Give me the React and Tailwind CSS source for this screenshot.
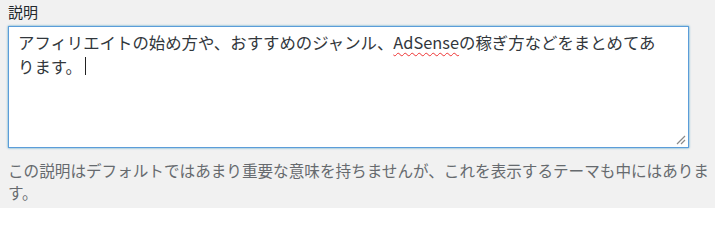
import React from "react";

const jp = { fontFamily: '"Noto Sans CJK JP", "Noto Sans", sans-serif' };

const DescriptionField = () => {
  return (
    <div className="h-[208px] w-full overflow-hidden bg-[#f1f1f1] px-2 pt-[2px]" style={jp}>
      <label className="block text-[15px] leading-5 text-[#23282d]">説明</label>
      <div className="relative mt-[4px] h-[122px] w-[681px] border border-[#5b9dd9] bg-white shadow-[0_0_2px_rgba(30,140,190,0.8)] pl-[9px] pt-[3px]">
        <div className="text-[16.4px] leading-6 text-[#32373c] whitespace-nowrap">
          <div>
            アフィリエイトの始め方や、おすすめのジャンル、
            <span className="underline decoration-wavy decoration-[#e33] decoration-1 underline-offset-[3px]">AdSense</span>
            の稼ぎ方などをまとめてあ
          </div>
          <div className="flex items-center">
            ります。
            <span className="ml-[3px] inline-block h-[18px] w-px bg-[#222]"></span>
          </div>
        </div>
        <svg className="absolute bottom-[2px] right-[2px]" width="12" height="12" viewBox="0 0 12 12">
          <path d="M11 3 L3 11 M11 7 L7 11" stroke="#8a8a8a" strokeWidth="1.2" fill="none" />
        </svg>
      </div>
      <p className="mt-[11px] text-[15.6px] leading-[22px] text-[#666a6e] whitespace-nowrap">
        この説明はデフォルトではあまり重要な意味を持ちませんが、これを表示するテーマも中にはありま
        <br />
        す。
      </p>
    </div>
  );
};

export default function App() {
  return <DescriptionField />;
}
